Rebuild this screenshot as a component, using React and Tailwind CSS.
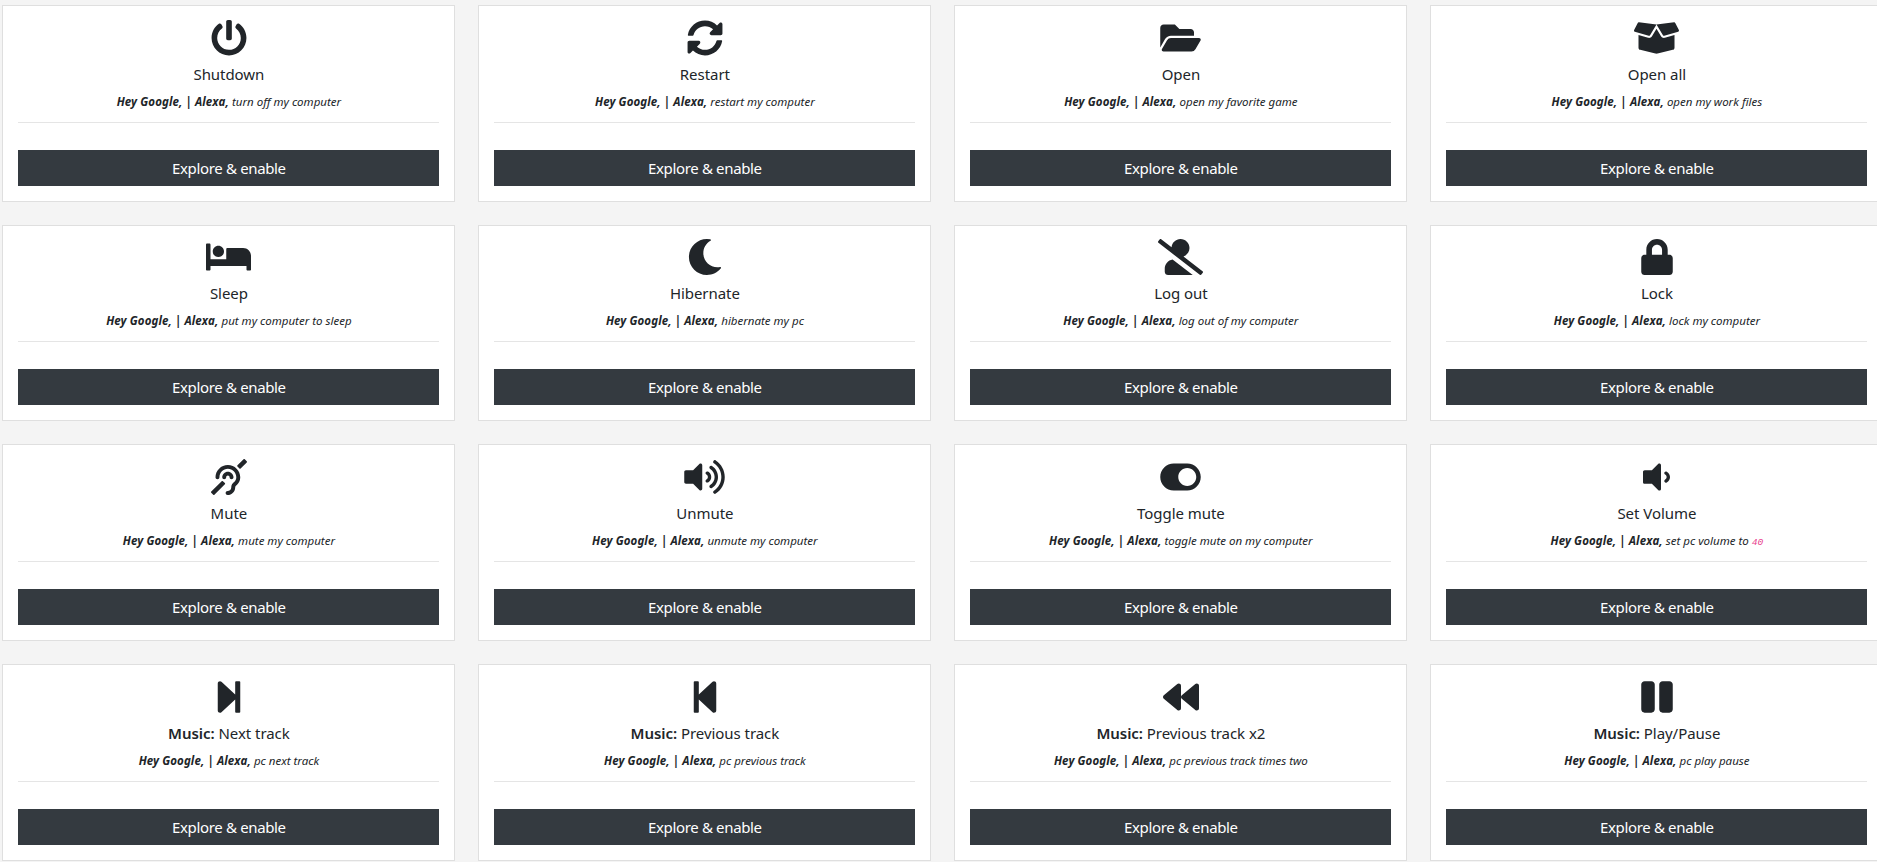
import React from "react";
import {
  FaPowerOff, FaSyncAlt, FaFolderOpen, FaBoxOpen, FaBed, FaMoon, FaUserSlash, FaLock,
  FaDeaf, FaVolumeUp, FaToggleOn, FaVolumeDown, FaStepForward, FaStepBackward, FaBackward, FaPause,
} from "react-icons/fa";

const items = [
  { Icon: FaPowerOff, w: "w-[36px]", title: "Shutdown", cmd: "turn off my computer" },
  { Icon: FaSyncAlt, w: "w-[36px]", title: "Restart", cmd: "restart my computer" },
  { Icon: FaFolderOpen, w: "w-[41px]", title: "Open", cmd: "open my favorite game" },
  { Icon: FaBoxOpen, w: "w-[45px]", title: "Open all", cmd: "open my work files" },
  { Icon: FaBed, w: "w-[45px]", title: "Sleep", cmd: "put my computer to sleep" },
  { Icon: FaMoon, w: "w-[36px]", title: "Hibernate", cmd: "hibernate my pc" },
  { Icon: FaUserSlash, w: "w-[45px]", title: "Log out", cmd: "log out of my computer" },
  { Icon: FaLock, w: "w-[32px]", title: "Lock", cmd: "lock my computer" },
  { Icon: FaDeaf, w: "w-[36px]", title: "Mute", cmd: "mute my computer" },
  { Icon: FaVolumeUp, w: "w-[41px]", title: "Unmute", cmd: "unmute my computer" },
  { Icon: FaToggleOn, w: "w-[41px]", title: "Toggle mute", cmd: "toggle mute on my computer" },
  { Icon: FaVolumeDown, w: "w-[27px]", title: "Set Volume", cmd: "set pc volume to ", code: "40" },
  { Icon: FaStepForward, w: "w-[32px]", music: true, title: "Next track", cmd: "pc next track" },
  { Icon: FaStepBackward, w: "w-[32px]", music: true, title: "Previous track", cmd: "pc previous track" },
  { Icon: FaBackward, w: "w-[36px]", music: true, title: "Previous track x2", cmd: "pc previous track times two" },
  { Icon: FaPause, w: "w-[32px]", music: true, title: "Play/Pause", cmd: "pc play pause" },
];

function Card({ Icon, w, title, cmd, code, music }) {
  return (
    <div className="h-[196.67px] bg-white border border-[#dfdfdf] px-[15px] pt-[13.8px] text-center text-[#212529]">
      <div className="h-[36px] flex justify-center">
        <Icon className={`h-[36px] ${w}`} />
      </div>
      <div className="mt-[7px] text-[15px] leading-[22px] tracking-[-0.05px]">
        {music && <b className="font-semibold">Music: </b>}
        {title}
      </div>
      <div className="mt-[8px] h-[18px] text-[11.5px] leading-[18px] italic">
        <b className="font-bold tracking-[0.1px]">Hey Google, | Alexa, </b>
        {cmd}
        {code && <code className="text-[9.6px] leading-none text-[#e83e8c] font-['Liberation_Mono',monospace]">{code}</code>}
      </div>
      <div className="mt-[11px] border-t border-[#e5e5e5]" />
      <button className="mt-[27px] w-full h-[36px] pt-[0.4px] bg-[#343a40] text-white text-[15px] tracking-[-0.35px]">Explore &amp; enable</button>
    </div>
  );
}

export default function App() {
  return (
    <div className="h-[862px] overflow-hidden bg-[#f4f4f4] font-['Noto_Sans',sans-serif]">
      <div className="w-[1881.2px] ml-[2.3px] pt-[4.9px] grid grid-cols-4 gap-x-[22.8px] gap-y-[23px]">
        {items.map((it) => (
          <Card key={it.title} {...it} />
        ))}
      </div>
    </div>
  );
}
